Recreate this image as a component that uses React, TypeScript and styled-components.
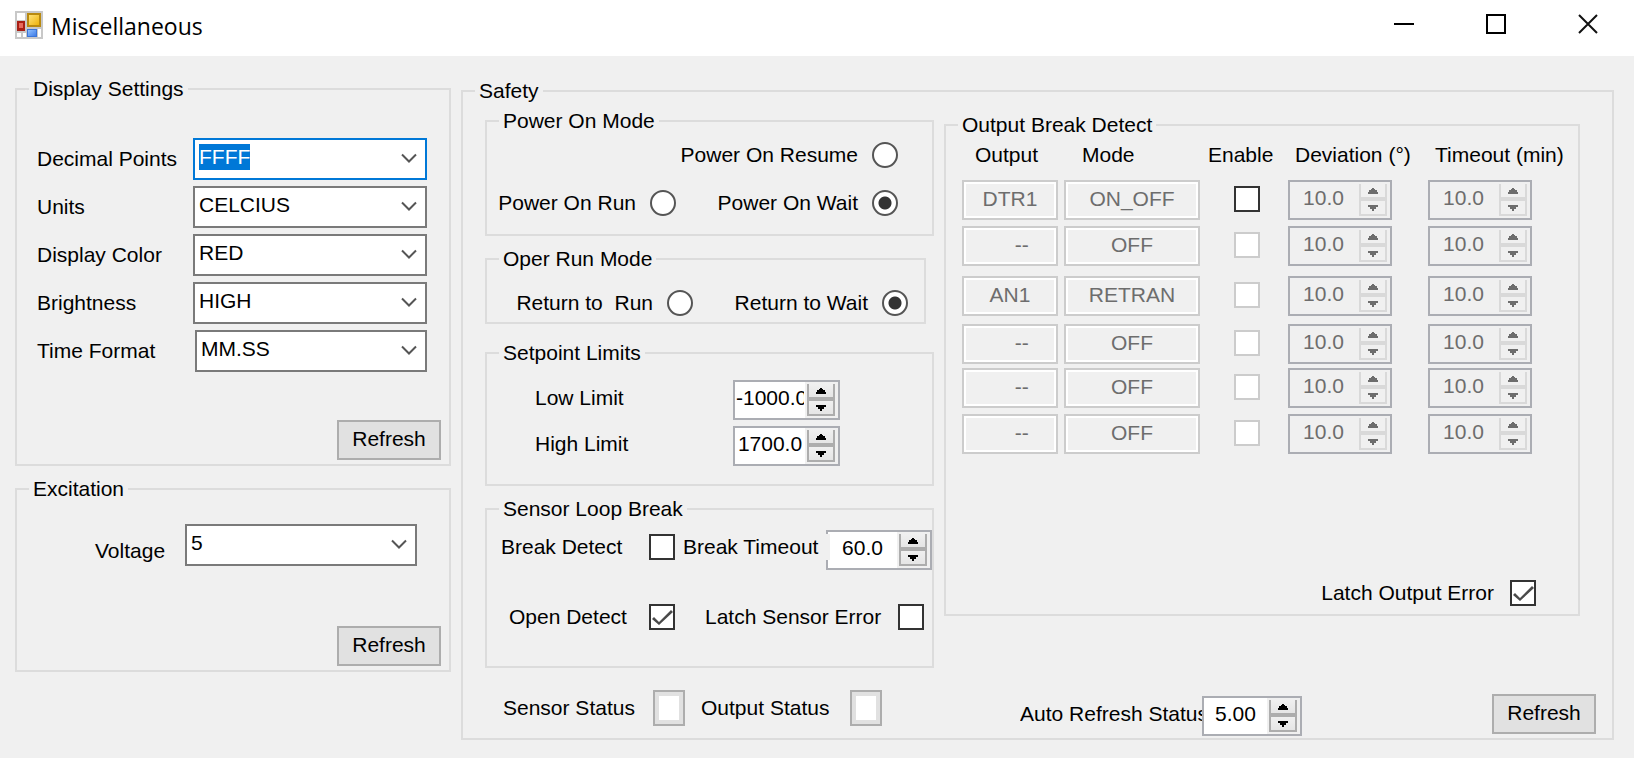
import React from "react";
import styled, { createGlobalStyle, css } from "styled-components";

const GlobalStyle = createGlobalStyle`
  * { box-sizing: border-box; }
  body {
    margin: 0;
    background: #f0f0f0;
    color: #000;
    font-family: "Liberation Sans", Arial, sans-serif;
    font-size: 21px;
    line-height: 30px;
  }
  input, select, button { font: inherit; color: inherit; margin: 0; }
  label { white-space: nowrap; }
`;

/* ---------- window frame ---------- */

const TitleBar = styled.header`
  display: flex;
  align-items: center;
  height: 56px;
  padding: 0 0 6px 15px;
  background: #fff;
`;

const Title = styled.h1`
  flex: 1;
  margin: 0 0 0 8px;
  padding-top: 2px;
  font-family: "Open Sans", "Noto Sans", sans-serif;
  font-size: 23px;
  font-weight: 400;
  line-height: 30px;
`;

const CaptionButton = styled.button`
  display: flex;
  align-items: center;
  align-self: flex-start;
  justify-content: center;
  width: 92px;
  height: 48px;
  padding: 0;
  border: 0;
  background: transparent;
`;

const Body = styled.main`
  display: grid;
  grid-template-columns: 436px minmax(1100px, 1fr);
  align-items: start;
  gap: 10px;
  padding: 18px 20px 18px 15px;
`;

/* ---------- groups ---------- */

const Group = styled.fieldset`
  min-width: 0;
  margin: 0;
  padding: 0;
  border: 2px solid #dcdcdc;
`;

const Legend = styled.legend`
  margin-left: 12px;
  padding: 0 4px;
  white-space: nowrap;
`;

const SideColumn = styled.div`
  display: flex;
  flex-direction: column;
  gap: 8px;
`;

const DisplayFields = styled.div`
  display: flex;
  flex-direction: column;
  gap: 6px;
  padding: 34px 22px 48px 20px;
`;

const ComboRow = styled.div<{ $indent?: number }>`
  display: grid;
  grid-template-columns: ${(p) => 156 + (p.$indent ?? 0)}px 1fr;
  align-items: center;
`;

const ExcitationFields = styled.div`
  display: grid;
  grid-template-columns: 90px 1fr;
  align-items: end;
  padding: 20px 32px 60px 78px;
`;

const GroupFooter = styled.div`
  display: flex;
  justify-content: flex-end;
  padding: 0 8px 4px;
`;

const SafetyGroup = styled(Group)`
  margin-top: 2px;
`;

const SafetyLayout = styled.div`
  display: grid;
  grid-template-columns: 449px minmax(0, 1fr);
  gap: 10px;
  padding: 0 32px 0 22px;
`;

const SafetyColumn = styled.div`
  display: flex;
  flex-direction: column;
`;

const OperGroup = styled(Group)`
  margin: 8px 8px 14px 0;
`;

const LoopGroup = styled(Group)`
  margin-top: 8px;
`;

const BreakGroup = styled(Group)`
  margin-top: 4px;
`;

/* ---------- controls ---------- */

const Select = styled.select<{ $focused?: boolean }>`
  appearance: none;
  display: block;
  width: 100%;
  height: 42px;
  padding: 0 36px 4px 4px;
  border: 2px solid ${(p) => (p.$focused ? "#0078d7" : "#7a7a7a")};
  border-radius: 0;
  outline: 0;
  background: #fff;
  ${(p) =>
    p.$focused &&
    css`
      color: #fff;
      background: linear-gradient(#0078d7, #0078d7) 4px 4px / 51px 26px no-repeat #fff;
    `}
`;

const SelectWrap = styled.div`
  position: relative;
  svg {
    position: absolute;
    right: 10px;
    top: 15px;
    pointer-events: none;
  }
`;

const PushButton = styled.button`
  width: 104px;
  height: 40px;
  padding: 0 0 2px;
  border: 2px solid #adadad;
  border-radius: 0;
  background: #e1e1e1;
`;

const StatusButton = styled.button`
  width: 32px;
  height: 36px;
  padding: 4px;
  border: 2px solid #adadad;
  border-radius: 0;
  background: linear-gradient(#fff, #fff) content-box, #e1e1e1;
`;

const Radio = styled.input.attrs({ type: "radio" })`
  appearance: none;
  flex: none;
  width: 26px;
  height: 26px;
  border: 2px solid #555;
  border-radius: 50%;
  background: #fff;
  &:checked {
    background: radial-gradient(circle, #333 6px, #fff 7px);
  }
`;

const Check = styled.input.attrs({ type: "checkbox" })`
  appearance: none;
  display: block;
  flex: none;
  width: 26px;
  height: 26px;
  border: 2px solid #333;
  border-radius: 0;
  background: #fff;
  &:disabled {
    border-color: #ccc;
  }
  &:checked::after {
    content: "";
    display: block;
    width: 22px;
    height: 22px;
    background: #4a4a4a;
    clip-path: polygon(1px 13px, 3px 11px, 8px 16px, 20px 4px, 22px 6px, 8px 19px);
  }
`;

const Choice = styled.label<{ $gap?: number }>`
  display: flex;
  align-items: center;
  gap: ${(p) => p.$gap ?? 14}px;
  height: 30px;
  white-space: pre;
`;

const SpinFrame = styled.span<{ $width: number; $disabled?: boolean }>`
  display: flex;
  flex: none;
  width: ${(p) => p.$width}px;
  height: 40px;
  border: 2px solid #abadb3;
  background: ${(p) => (p.$disabled ? "#f0f0f0" : "#fff")};
`;

const SpinInput = styled.input`
  flex: 1;
  width: 0;
  min-width: 0;
  padding: 0 1px 4px;
  border: 0;
  outline: 0;
  background: transparent;
  text-align: center;
  &:disabled {
    color: #6d6d6d;
  }
`;

const SpinButtons = styled.span`
  display: flex;
  flex: none;
  flex-direction: column;
  width: 33px;
  padding: 2px 3px 2px 2px;
  background: #f0f0f0;
`;

const Step = styled.button`
  display: flex;
  flex: 1;
  align-items: center;
  justify-content: center;
  padding: 0;
  border: 2px solid #adadad;
  border-radius: 0;
  background: linear-gradient(#f0f0f0, #e5e5e5);
  color: #000;
  &:first-child {
    border-top: 0;
  }
  &:disabled {
    border-color: #d9d9d9;
    background: #f0f0f0;
    color: #6d6d6d;
  }
`;

const ReadOut = styled.input`
  display: block;
  width: 100%;
  height: 40px;
  padding: 0 0 2px;
  border: 2px solid #ccc;
  box-shadow: inset 0 0 0 2px #fff;
  background: #f0f0f0;
  color: #6d6d6d;
  text-align: center;
`;

/* ---------- safety content ---------- */

const RadioGrid = styled.div<{ $first: number; $second: number; $top: number; $bottom: number }>`
  display: grid;
  grid-template-columns: ${(p) => p.$first}px ${(p) => p.$second}px;
  justify-items: end;
  row-gap: 18px;
  padding: ${(p) => p.$top}px 0 ${(p) => p.$bottom}px;
`;

const SecondColumn = styled.div`
  grid-column: 2;
`;

const LimitGrid = styled.div`
  display: grid;
  grid-template-columns: 198px auto;
  justify-content: start;
  row-gap: 6px;
  padding: 12px 0 18px 48px;
  label {
    line-height: 36px;
  }
`;

const LoopGrid = styled.div`
  display: grid;
  grid-template-columns: 188px 1fr;
  align-items: start;
  row-gap: 32px;
  padding: 6px 0 34px;
`;

const LoopChoice = styled(Choice)<{ $left: number; $right?: number }>`
  justify-content: space-between;
  margin: 0 ${(p) => p.$right ?? 0}px 0 ${(p) => p.$left}px;
`;

const TimeoutField = styled.div`
  display: flex;
  justify-content: flex-end;
`;

/* The label's own background runs over the spinner's left edge. */
const OverlapLabel = styled.label`
  position: relative;
  z-index: 1;
  flex: 1;
  height: 26px;
  margin: 4px -4px 0 8px;
  background: #f0f0f0;
  line-height: 26px;
`;

const LoopFirst = styled(LoopChoice)`
  height: 34px;
`;

const StatusRow = styled.div`
  display: grid;
  grid-template-columns: 150px 48px 149px auto;
  align-items: center;
  justify-content: start;
  margin-top: 22px;
  padding: 0 0 12px 18px;
`;

const BreakTable = styled.table`
  width: calc(100% - 16px);
  margin-left: 16px;
  border-collapse: collapse;
  table-layout: fixed;
`;

const HeadCell = styled.th<{ $left: number }>`
  height: 40px;
  padding: 0 0 0 ${(p) => p.$left}px;
  font-weight: 400;
  text-align: left;
  vertical-align: top;
  white-space: nowrap;
`;

const BreakRow = styled.tr<{ $height: number }>`
  height: ${(p) => p.$height}px;
`;

const Cell = styled.td<{ $left?: number; $right?: number }>`
  padding: 0 ${(p) => p.$right ?? 0}px 0 ${(p) => p.$left ?? 0}px;
  vertical-align: top;
`;

const EnableCell = styled(Cell)`
  padding-top: 6px;
`;

const LatchRow = styled.div`
  display: flex;
  justify-content: flex-end;
  padding: 124px 42px 6px 0;
`;

const SafetyFooter = styled.div`
  display: flex;
  justify-content: space-between;
  height: 42px;
  margin: 78px -16px 0 76px;
`;

const AutoField = styled.div`
  display: flex;
  align-self: flex-end;
  label {
    width: 182px;
    overflow: hidden;
    line-height: 36px;
  }
`;

/* ---------- components ---------- */

function Chevron() {
  return (
    <svg width="16" height="11" viewBox="0 0 16 11" aria-hidden="true">
      <path d="M1 1.5 L8 8.5 L15 1.5" fill="none" stroke="#555" strokeWidth="2" />
    </svg>
  );
}

function Combo({ id, value, focused }: { id: string; value: string; focused?: boolean }) {
  return (
    <SelectWrap>
      <Select id={id} defaultValue={value} $focused={focused}>
        <option>{value}</option>
      </Select>
      <Chevron />
    </SelectWrap>
  );
}

function Spinner(props: { id: string; value: string; width?: number; disabled?: boolean; label?: string }) {
  const { id, value, width = 104, disabled, label } = props;
  return (
    <SpinFrame $width={width} $disabled={disabled}>
      <SpinInput id={id} defaultValue={value} disabled={disabled} aria-label={label} />
      <SpinButtons>
        <Step type="button" aria-label="Increase" disabled={disabled}>
          <svg width="12" height="6" viewBox="0 0 12 6" aria-hidden="true">
            <path d="M5 0h2v1h1v1h2v2h1v2H1V4h1V2h2V1h1z" fill="currentColor" />
          </svg>
        </Step>
        <Step type="button" aria-label="Decrease" disabled={disabled}>
          <svg width="12" height="6" viewBox="0 0 12 6" aria-hidden="true">
            <path d="M1 0h10v2h-2v2h-2v2H5V4H3V2H1z" fill="currentColor" />
          </svg>
        </Step>
      </SpinButtons>
    </SpinFrame>
  );
}

const combos = [
  { id: "decimal", label: "Decimal Points", value: "FFFF", focused: true },
  { id: "units", label: "Units", value: "CELCIUS" },
  { id: "color", label: "Display Color", value: "RED" },
  { id: "brightness", label: "Brightness", value: "HIGH" },
  { id: "time", label: "Time Format", value: "MM.SS", indent: 2 },
];

const outputs = [
  { output: "DTR1", mode: "ON_OFF", enabled: true, height: 46 },
  { output: "    --", mode: "OFF", height: 50 },
  { output: "AN1", mode: "RETRAN", height: 48 },
  { output: "    --", mode: "OFF", height: 44 },
  { output: "    --", mode: "OFF", height: 46 },
  { output: "    --", mode: "OFF", height: 40 },
];

export default function App() {
  return (
    <>
      <GlobalStyle />
      <TitleBar>
        <svg width="28" height="28" viewBox="0 0 28 28" aria-hidden="true">
          <defs>
            <linearGradient id="gold" x1="0" y1="0" x2="1" y2="1">
              <stop offset="0" stopColor="#ffe27a" />
              <stop offset="1" stopColor="#eeb30c" />
            </linearGradient>
            <linearGradient id="sky" x1="0" y1="0" x2="1" y2="1">
              <stop offset="0" stopColor="#8fc0ff" />
              <stop offset="1" stopColor="#3f7ce6" />
            </linearGradient>
          </defs>
          <rect width="28" height="28" fill="#c8c8c8" />
          <path d="M2 2h8v7H2zM2 22h4v4H2zM8 22h3v4H8zM23 18h3v8h-3z" fill="#fff" />
          <rect x="12" y="2" width="14" height="14" fill="#b98a10" />
          <rect x="14" y="4" width="10" height="10" fill="url(#gold)" />
          <rect x="2" y="10" width="8" height="10" fill="#a91f14" />
          <rect x="4" y="12" width="4" height="5" fill="#e8695c" />
          <rect x="12" y="18" width="10" height="8" fill="#3a74d8" />
          <rect x="13" y="19" width="8" height="6" fill="url(#sky)" />
        </svg>
        <Title>Miscellaneous</Title>
        <CaptionButton type="button" aria-label="Minimize">
          <svg width="20" height="20" viewBox="0 0 20 20">
            <path d="M0 10h20" stroke="#000" strokeWidth="2" />
          </svg>
        </CaptionButton>
        <CaptionButton type="button" aria-label="Maximize">
          <svg width="20" height="20" viewBox="0 0 20 20">
            <rect x="1" y="1" width="18" height="18" fill="none" stroke="#000" strokeWidth="2" />
          </svg>
        </CaptionButton>
        <CaptionButton type="button" aria-label="Close">
          <svg width="20" height="20" viewBox="0 0 20 20">
            <path d="M1 1l18 18M19 1L1 19" stroke="#111" strokeWidth="2" />
          </svg>
        </CaptionButton>
      </TitleBar>

      <Body>
        <SideColumn>
          <Group>
            <Legend>Display Settings</Legend>
            <DisplayFields>
              {combos.map((c) => (
                <ComboRow key={c.id} $indent={c.indent}>
                  <label htmlFor={c.id}>{c.label}</label>
                  <Combo id={c.id} value={c.value} focused={c.focused} />
                </ComboRow>
              ))}
            </DisplayFields>
            <GroupFooter>
              <PushButton type="button">Refresh</PushButton>
            </GroupFooter>
          </Group>
          <Group>
            <Legend>Excitation</Legend>
            <ExcitationFields>
              <label htmlFor="voltage">Voltage</label>
              <Combo id="voltage" value="5" />
            </ExcitationFields>
            <GroupFooter>
              <PushButton type="button">Refresh</PushButton>
            </GroupFooter>
          </Group>
        </SideColumn>

        <SafetyGroup>
          <Legend>Safety</Legend>
          <SafetyLayout>
            <SafetyColumn>
              <Group>
                <Legend>Power On Mode</Legend>
                <RadioGrid $first={189} $second={222} $top={4} $bottom={16}>
                  <SecondColumn>
                    <Choice>
                      Power On Resume
                      <Radio name="power" />
                    </Choice>
                  </SecondColumn>
                  <Choice>
                    Power On Run
                    <Radio name="power" />
                  </Choice>
                  <Choice>
                    Power On Wait
                    <Radio name="power" defaultChecked />
                  </Choice>
                </RadioGrid>
              </Group>

              <OperGroup>
                <Legend>Oper Run Mode</Legend>
                <RadioGrid $first={206} $second={215} $top={14} $bottom={4}>
                  <Choice>
                    {"Return to  Run"}
                    <Radio name="oper" />
                  </Choice>
                  <Choice>
                    Return to Wait
                    <Radio name="oper" defaultChecked />
                  </Choice>
                </RadioGrid>
              </OperGroup>

              <Group>
                <Legend>Setpoint Limits</Legend>
                <LimitGrid>
                  <label htmlFor="low">Low Limit</label>
                  <Spinner id="low" value="-1000.0" width={107} />
                  <label htmlFor="high">High Limit</label>
                  <Spinner id="high" value="1700.0" width={107} />
                </LimitGrid>
              </Group>

              <LoopGroup>
                <Legend>Sensor Loop Break</Legend>
                <LoopGrid>
                  <LoopFirst $left={14}>
                    Break Detect
                    <Check />
                  </LoopFirst>
                  <TimeoutField>
                    <OverlapLabel htmlFor="timeout">Break Timeout</OverlapLabel>
                    <Spinner id="timeout" value="60.0" width={106} />
                  </TimeoutField>
                  <LoopChoice $left={22}>
                    Open Detect
                    <Check defaultChecked />
                  </LoopChoice>
                  <LoopChoice $left={30} $right={8}>
                    Latch Sensor Error
                    <Check />
                  </LoopChoice>
                </LoopGrid>
              </LoopGroup>

              <StatusRow>
                <label htmlFor="sensor-status">Sensor Status</label>
                <StatusButton id="sensor-status" type="button" />
                <label htmlFor="output-status">Output Status</label>
                <StatusButton id="output-status" type="button" />
              </StatusRow>
            </SafetyColumn>

            <SafetyColumn>
              <BreakGroup>
                <Legend>Output Break Detect</Legend>
                <BreakTable>
                  <colgroup>
                    <col width="102" />
                    <col width="136" />
                    <col width="88" />
                    <col width="140" />
                    <col />
                  </colgroup>
                  <thead>
                    <tr>
                      <HeadCell $left={13}>Output</HeadCell>
                      <HeadCell $left={18}>Mode</HeadCell>
                      <HeadCell $left={8}>Enable</HeadCell>
                      <HeadCell $left={7}>Deviation (°)</HeadCell>
                      <HeadCell $left={7}>Timeout (min)</HeadCell>
                    </tr>
                  </thead>
                  <tbody>
                    {outputs.map((o, i) => (
                      <BreakRow key={i} $height={o.height}>
                        <Cell $right={6}>
                          <ReadOut aria-label={`Output ${i + 1}`} defaultValue={o.output} disabled />
                        </Cell>
                        <Cell>
                          <ReadOut aria-label={`Mode ${i + 1}`} defaultValue={o.mode} disabled />
                        </Cell>
                        <EnableCell $left={34}>
                          <Check aria-label={`Enable ${i + 1}`} disabled={!o.enabled} />
                        </EnableCell>
                        <Cell>
                          <Spinner id={`dev${i}`} value="10.0" disabled label={`Deviation ${i + 1}`} />
                        </Cell>
                        <Cell>
                          <Spinner id={`out${i}`} value="10.0" disabled label={`Timeout ${i + 1}`} />
                        </Cell>
                      </BreakRow>
                    ))}
                  </tbody>
                </BreakTable>
                <LatchRow>
                  <Choice $gap={16}>
                    Latch Output Error
                    <Check defaultChecked />
                  </Choice>
                </LatchRow>
              </BreakGroup>

              <SafetyFooter>
                <AutoField>
                  <label htmlFor="auto">Auto Refresh Status</label>
                  <Spinner id="auto" value="5.00" width={100} />
                </AutoField>
                <PushButton type="button">Refresh</PushButton>
              </SafetyFooter>
            </SafetyColumn>
          </SafetyLayout>
        </SafetyGroup>
      </Body>
    </>
  );
}
